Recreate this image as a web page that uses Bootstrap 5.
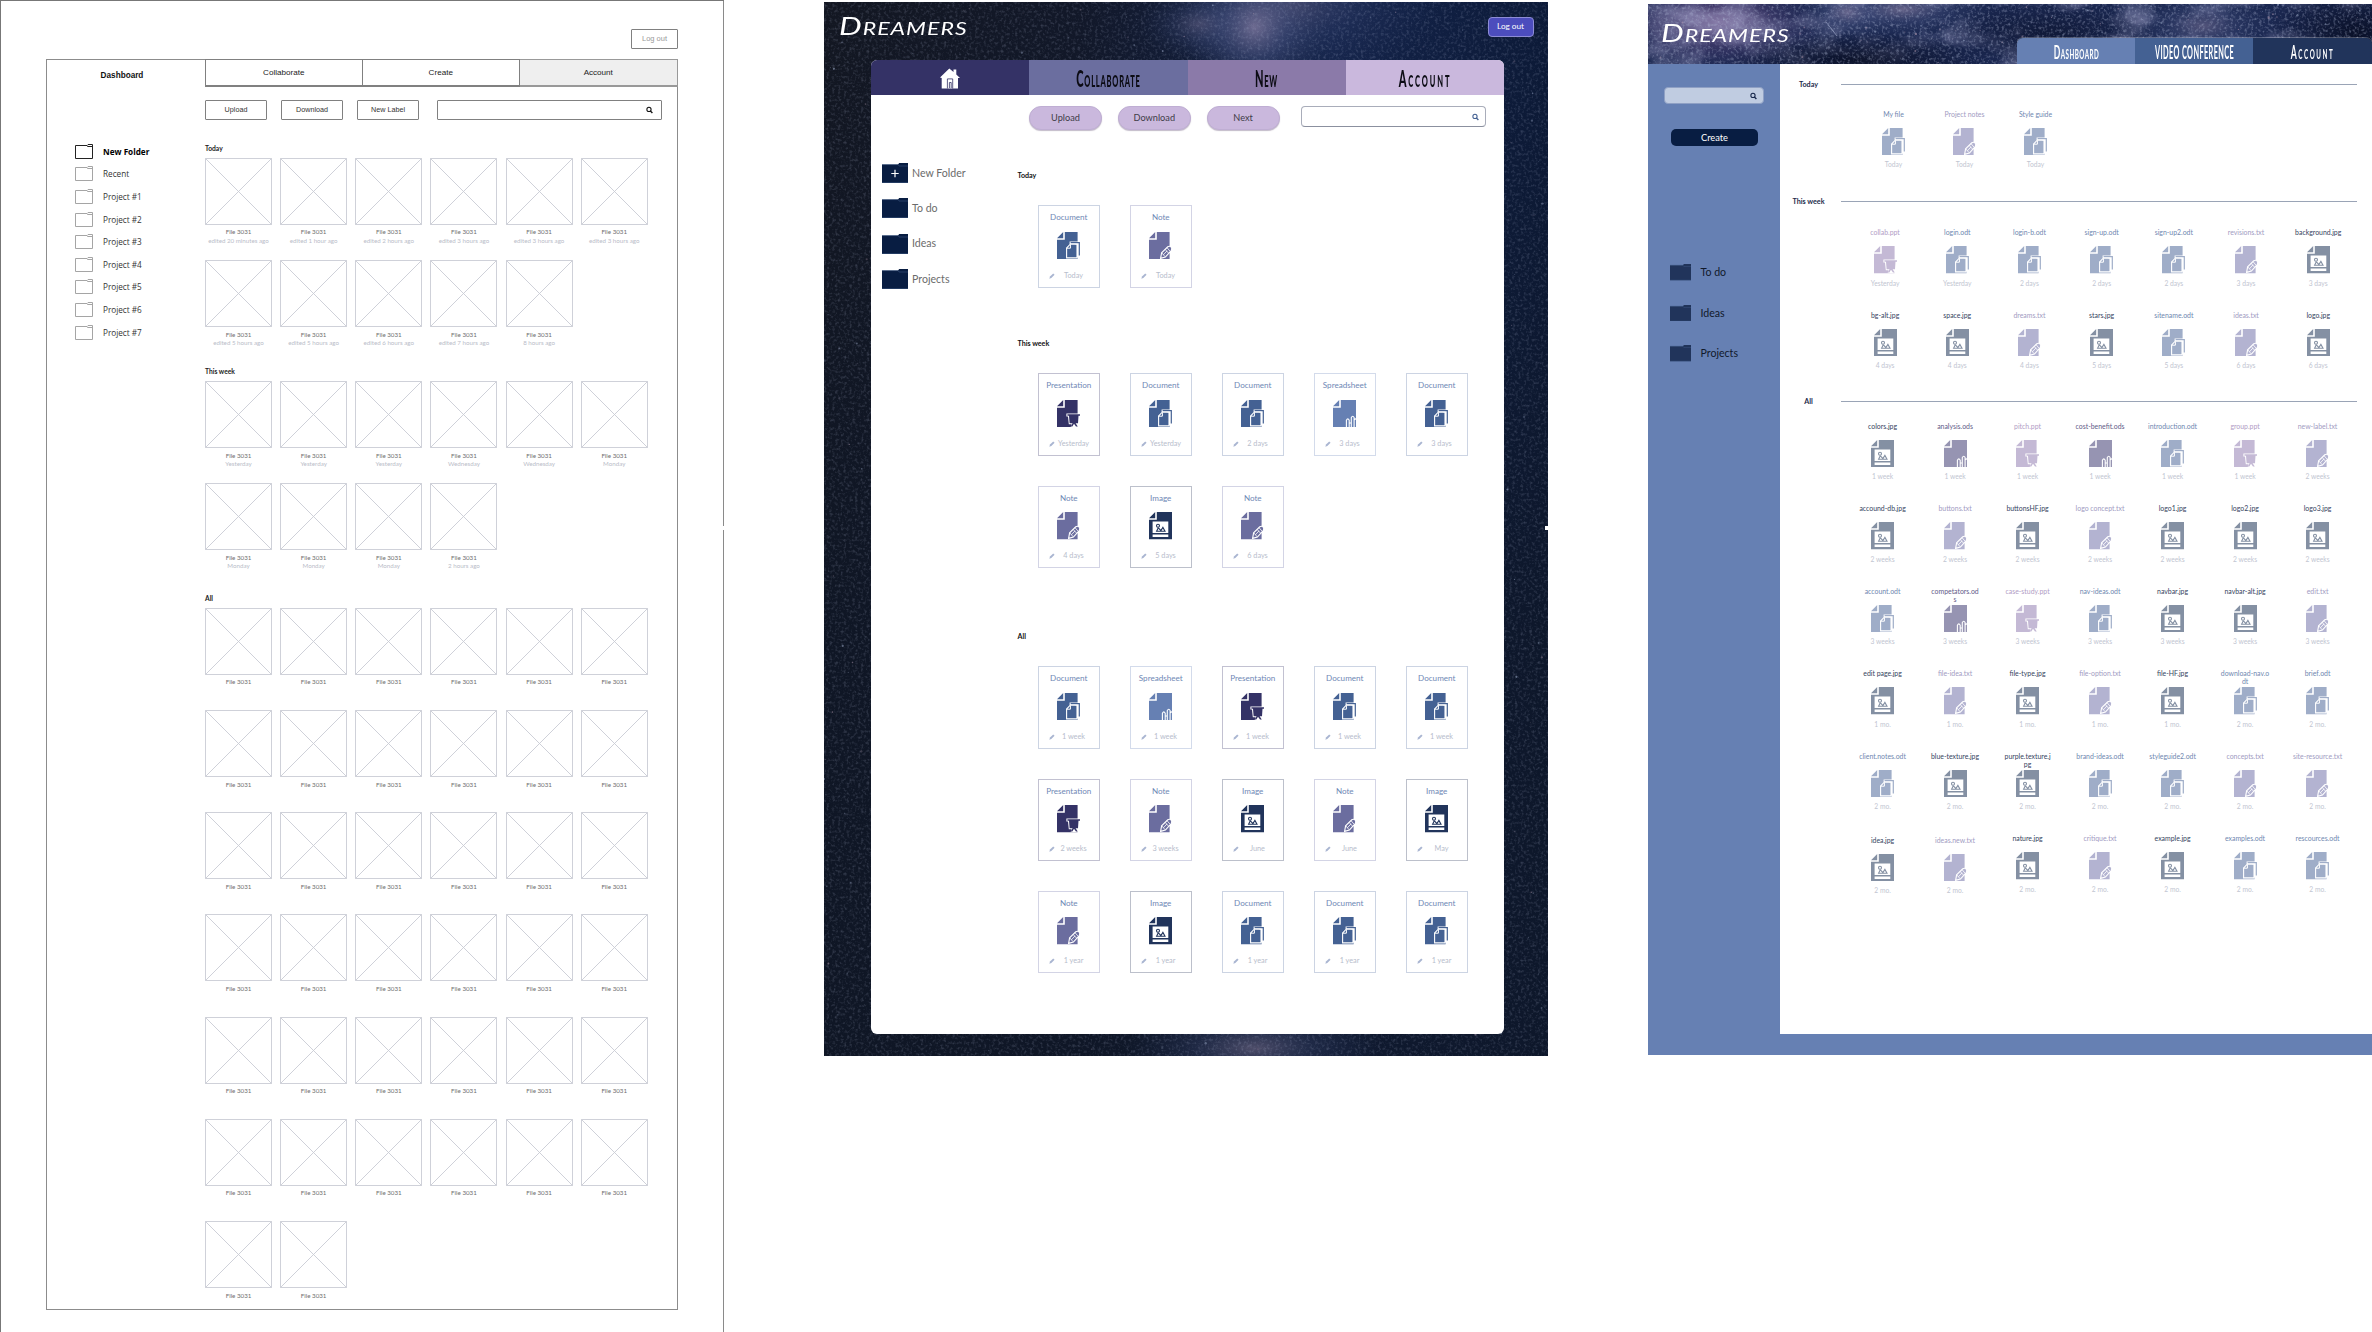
<!DOCTYPE html>
<html lang="en">
<head>
<meta charset="utf-8">
<title>Dreamers dashboards</title>
<link href="https://cdn.jsdelivr.net/npm/bootstrap@5.3.0/dist/css/bootstrap.min.css" rel="stylesheet">
<style>
body{width:2372px;height:1332px;overflow:hidden;background:#fff;font-family:Lato,"Open Sans",sans-serif;line-height:1}
svg{display:block;flex:none}
.board{width:724px;flex:none;position:relative}
.handle{position:absolute;right:-1px;top:526px;width:4px;height:4px;background:#fff}
.sheet-title{font-weight:700;line-height:10px;margin:0}
.cells{display:flex;flex-wrap:wrap;align-content:flex-start}

/* wireframe board */
.wire{height:1332px;box-shadow:inset 1px 1px #777,inset -1px 0 #8a8a8a;color:#333;font-family:"Liberation Sans",sans-serif}
.wire-top{height:59px;padding:29px 46px 0 0}
.wire .btn{font-size:7.2px;line-height:1;padding:0;height:20px;width:62px;border:1px solid #808080;border-radius:1px;color:#333;background:#fff}
.wire .btn.logout{width:47px;color:#999;font-size:7.5px}
.wire-panel{margin-left:46px;width:631.5px;height:1251px;box-shadow:inset 0 0 0 1px #8c8c8c}
.wire-side{width:159px;flex:none}
.wire-name{height:34px;width:152px;font-size:8.2px;font-weight:700;color:#111}
.wire-list{margin-top:46.6px;padding-left:29px;font:8.2px "Open Sans",sans-serif;color:#333}
.wire-list li{height:22.6px;gap:10px;padding-top:1px}
.wire-tabs{height:28px}
.wire-tabs .nav-link{padding:1px 0 0;color:#222;font-size:8.1px;border:1px solid #808080;border-bottom-width:2px;border-left-width:0;background:#fff}
.wire-tabs .nav-link:first-child{border-left-width:1px}
.wire-tabs .nav-link:last-child{background:#efefef;border-color:#999}
.wire-tools{margin-top:13px;gap:14px}
.wire-find{width:225px;height:20px;margin-left:4px;border:1px solid #808080;border-radius:1px;padding-right:8px}
.wire-body{margin-top:23px;font-family:Lato,sans-serif}
.wire-body section:nth-child(1){height:223.3px}
.wire-body section:nth-child(2){height:226.7px}
.wire-body .sheet-title{font-size:6.7px;margin-bottom:4.8px;color:#222}
.wire-cell{width:75.15px;height:102.2px;font-size:6.2px;line-height:8.5px;color:#6f6f6f}
.wire-cell svg{margin-bottom:3.6px}
.wire-cell div{width:67px;text-align:center;white-space:nowrap}
.wire-cell .when{color:#b9bcc8}

/* night sky board */
.night{margin:2px 0 0 100px;height:1054px;width:723.5px}
.sky{position:absolute;left:0;top:0}
.over{position:relative}
.brand{color:#fff;font-variant:small-caps;font-style:italic;font-size:25px;line-height:26px;letter-spacing:.8px;white-space:nowrap;transform-origin:0 50%;transform:scaleX(1.28)}
.night-top{height:58px;padding:10px 14px 0 15px}
.night-top .btn{width:46px;height:20px;margin-top:4.5px;padding:0;font-size:8.2px;line-height:1;color:#fff;background:#4c4dbd;border:1px solid #8d8cd6;border-radius:4px}
.night-panel{margin-left:47px;width:633px;height:974px;background:#fff;border-radius:6px;overflow:hidden}
.night-tabs{height:34.5px}
.night-tabs .nav-link{padding:2px 0 0;color:#0c0c14}
.tall{display:inline-block;font-variant:small-caps;white-space:nowrap;transform:scaleX(.48);font-weight:700;letter-spacing:1px}
.night-tabs .tall{font-size:23.5px;transform:scaleX(.47);font-weight:900;letter-spacing:1.6px}
.night-tabs .tall.spaced{letter-spacing:4px}
.night-tools{margin-top:11.5px;padding-left:158px;gap:15.8px}
.night-tools .btn{width:73px;height:23.5px;padding:0;font-size:9.2px;line-height:1;color:#3f3c48;background:#cab8dd;border:1px solid #bfaed3;border-radius:12px;box-shadow:0 1px 1px rgba(80,60,100,.35)}
.night-find{width:185px;height:21px;margin-left:6px;border:1px solid #a9adba;border-bottom-color:#8b909f;border-radius:4px;padding-right:6px}
.night-side{width:146.5px;flex:none;padding-left:11px;margin-top:26px}
.night-side li{height:35.3px;gap:4px;font-size:10.6px;color:#6b6b6b}
.night-body{margin-top:41.5px}
.night-body section:nth-child(1){height:168.2px}
.night-body section:nth-child(2){height:292.8px}
.night-body .sheet-title{font-size:7.1px;color:#111;margin-bottom:24.3px}
.night-body .cells{padding-left:20px;width:490px}
.file-card{width:62.5px;height:82.5px;margin:0 29.5px 29.8px 0;border:1px solid #ccd4e3;border-radius:0;padding-top:6px;font-size:8.1px;color:#6f88b5;text-align:center;line-height:10px}
.file-card .ico{margin:9.5px 0 11.3px 18px}
.file-card .when{width:44px;margin-left:10px;display:flex;align-items:center;font-size:7.3px;color:#b7bdcc}
.file-card .when span{flex:1;white-space:nowrap}
.night .doc .ico{color:#446193}.night .note .ico{color:#6b6d9f}.night .pres .ico{color:#343266}.night .sheet .ico{color:#6680b3}.night .img .ico{color:#21345b}
.file-card.img{border-color:#bcc0cb}.file-card.pres{border-color:#c2c1d1}.file-card.note{border-color:#d3d4e5}.file-card.sheet{border-color:#d3dbeb}

/* blue board */
.blue{margin:4px 0 0 100.5px;width:723.5px}
.blue-top{height:60px;position:relative}
.blue-top .over{height:60px;padding:15px 0 0 13px}
.blue-tabs{width:354.5px;height:26px;margin-top:19px;border-radius:6px 6px 0 0;overflow:hidden;box-shadow:0 -1px rgba(255,255,255,.25)}
.blue-tabs .nav-link{padding:1px 0 0;color:#fff}
.blue-tabs .tall{font-size:18px}
.blue-tabs .tall.packed{transform:scaleX(.405)}
.blue-tabs .tall.spaced{letter-spacing:3.4px}
.blue-side{width:131.5px;flex:none;background:#6680b3;padding-top:23px}
.blue-find{margin-left:16px;width:99.5px;height:17px;background:#c0cce1;border:1px solid #8fa0c4;border-radius:4px;padding-right:6px}
.blue-side .btn{display:block;margin:24.5px 0 0 23px;width:87px;height:17.5px;padding:0;font-size:9.3px;line-height:1;color:#fff;background:#081d42;border:0;border-radius:5px}
.blue-side ul{margin-top:106px;padding-left:22px}
.blue-side li{height:40.7px;gap:9.5px;font-size:10.6px;color:#11192b}
.blue-main{height:970px;width:592px;padding-top:15.5px}
.blue-main section:nth-child(1){height:117px}
.blue-main section:nth-child(2){height:200px}
.blue-main .sheet-title{width:58px;text-align:center;font-size:7.2px;color:#1d2b4b}
.rule-line{width:516px;height:1.5px;margin-left:3px;background:#9aa4b6}
.tile{font-size:6.9px;line-height:8px;text-align:center}
.tile .name{height:18px;width:49px;margin:0 auto;display:flex;flex-direction:column;align-items:center;white-space:nowrap}
.tile .ico{margin:0 auto 5px}
.tile .when{color:#c1c5d1;font-size:6.7px;white-space:nowrap}
.lower{padding-top:1.6px}
.blue .doc{color:#6f87b0}.blue .note{color:#a19bc2}.blue .pres{color:#b19dc5}.blue .img{color:#35435e}.blue .sheet{color:#625b88}
.blue .doc .ico{color:#9fadc8}.blue .note .ico{color:#b3b3d1}.blue .pres .ico{color:#c4b9d5}.blue .img .ico{color:#8490a3}.blue .sheet .ico{color:#9694b2}
.blue-foot{height:20.5px;background:#6680b3}
</style>
<script src="https://cdn.jsdelivr.net/npm/bootstrap@5.3.0/dist/js/bootstrap.bundle.min.js"></script>
</head>
<body>
<svg width="0" height="0" style="position:absolute">
  <defs>
    <symbol id="doc" viewBox="0 0 23 27.5"><path fill="currentColor" d="M0 27.5V7.8H7.8V0H20.6V27.5zM0 6.2 6.2 0V6.2z"/><path fill="#fff" d="M12.6 9.6H23V25.6H18V12H12.6z"/><path d="M13.6 10.6H22.3V23.5" fill="none" stroke="currentColor" stroke-width="1.2"/><path d="M13.2 12.2H20V25.9H9.6V16z" fill="currentColor" stroke="#fff" stroke-width="1.1"/><path d="M13.4 12.5V16.2H9.8" fill="none" stroke="#fff"/></symbol>
    <symbol id="note" viewBox="0 0 23 27.5"><path fill="currentColor" d="M0 27.5V7.8H7.8V0H20.6V27.5zM0 6.2 6.2 0V6.2z"/><path d="M11.6 26.4 12.6 20.8 18.8 14.8Q20.8 13.6 22.2 15.2 23.4 17 22 18.8L16.4 25z" fill="currentColor" stroke="#fff" stroke-width="1.1"/><path d="M12.8 20.9 16.2 24.8M16.2 17.4 19.6 21.2M18 15.6 21.2 19.4M14.4 22.8 18 18.9" fill="none" stroke="#fff" stroke-width=".8"/></symbol>
    <symbol id="pres" viewBox="0 0 23 27.5"><path fill="currentColor" d="M0 27.5V7.8H7.8V0H20.6V27.5zM0 6.2 6.2 0V6.2z"/><path fill="#fff" d="M9.4 13.4H23V16.6H22.2L21.8 24H21L22.5 27.5H13.5L14.6 24.2H11.8L11 16.6H9.4z"/><path fill="currentColor" d="M10.4 14.3H23V15.8H21.5L21 23.2H18.6L20.8 26.6H19L17 23.8 15.3 26.6H13.6L15.6 23.2H12.6L12 15.8H10.4z"/></symbol>
    <symbol id="sheet" viewBox="0 0 23 27.5"><path fill="currentColor" d="M0 27.5V7.8H7.8V0H23V27.5zM0 6.2 6.2 0V6.2z"/><path d="M13.4 27.5V20.2Q14.8 17.6 16.2 20.2V27.5M18.3 27.5V17.6Q19.7 15 21.1 17.6V27.5M16.4 23H18.2M21.2 20Q22.4 18 23 19.5" fill="none" stroke="#fff" stroke-width="1.1"/></symbol>
    <symbol id="img" viewBox="0 0 23 27.5"><path fill="currentColor" d="M0 27.5V7.8H7.8V0H23V27.5zM0 6.2 6.2 0V6.2z"/><path fill="#fff" d="M3.6 9.6H19.3V21H3.6zM3.6 22.6H19.3V25H3.6z"/><g fill="none" stroke="currentColor" stroke-width="1.1"><circle cx="9" cy="13.8" r="1.5"/><path d="M9.4 15.4 7.6 19.2H16L13.9 15.4 11.9 18.6 9.6 16.2"/></g></symbol>
    <symbol id="pen" viewBox="0 0 6 6"><path d="M.3 5.7 1 3.6 4.2.4 5.6 1.7 2.3 5z" fill="#a9b5d1"/></symbol>
    <symbol id="find" viewBox="0 0 8 8"><circle cx="3.4" cy="3.3" r="2.4" fill="none" stroke="currentColor" stroke-width="1.2"/><path d="M4.9 5 7.3 7.5" stroke="currentColor" stroke-width="1.6"/></symbol>
    <symbol id="folder" viewBox="0 0 26 20"><path d="M0 1.4H16L17.2 0H26V20H0z" fill="currentColor"/><path d="M0 1.6H16.2L17 3H26M0 19.6H26" fill="none" stroke="#3c5580" stroke-width=".6"/></symbol>
    <symbol id="wfolder" viewBox="0 0 18 15"><path d="M.5 1.5H12L13 .5H17.5V14.5H.5zM12 1.5 12.5 2.5H17.5" fill="none" stroke="currentColor"/></symbol>
    <symbol id="thumb" viewBox="0 0 67 67"><path d="M.5.5H66.5V66.5H.5zL66.5 66.5M66.5.5.5 66.5" fill="none" stroke="#c9ccd5" stroke-width=".9"/></symbol>
    <filter id="cloud" x="0" y="0" width="100%" height="100%"><feTurbulence type="fractalNoise" baseFrequency=".018 .024" numOctaves="5" seed="8"/><feColorMatrix values="0 0 0 0 .42  0 0 0 0 .42  0 0 0 0 .66  2.2 1.2 0 0 -1.5"/></filter>
    <filter id="grain" x="0" y="0" width="100%" height="100%"><feTurbulence type="fractalNoise" baseFrequency=".35" numOctaves="2" seed="3"/><feColorMatrix values="0 0 0 0 .45  0 0 0 0 .5  0 0 0 0 .68  1.8 0 0 0 -.86"/></filter>
    <linearGradient id="nbase" x1="0" x2="1"><stop offset="0" stop-color="#131722"/><stop offset=".35" stop-color="#121829"/><stop offset=".7" stop-color="#14244c"/><stop offset="1" stop-color="#0c1a38"/></linearGradient>
    <linearGradient id="nfade" x1="0" x2="0" y1="0" y2="1"><stop offset="0" stop-color="#0e1626" stop-opacity="0"/><stop offset=".6" stop-color="#0e1626" stop-opacity=".75"/></linearGradient>
    <radialGradient id="glow"><stop offset="0" stop-color="#8a80a4" stop-opacity=".85"/><stop offset=".45" stop-color="#44507f" stop-opacity=".5"/><stop offset="1" stop-color="#27365f" stop-opacity="0"/></radialGradient>
    <radialGradient id="dark"><stop offset="0" stop-color="#080e24" stop-opacity=".9"/><stop offset="1" stop-color="#080e24" stop-opacity="0"/></radialGradient>
    <radialGradient id="violet"><stop offset="0" stop-color="#8a5c96" stop-opacity=".6"/><stop offset="1" stop-color="#5b4a86" stop-opacity="0"/></radialGradient>
  </defs>
</svg>

<main class="d-flex align-items-start">
  <!-- Wireframe -->
  <div class="board wire">
    <div class="wire-top d-flex justify-content-end"><button class="btn logout">Log out</button></div>
    <div class="wire-panel d-flex">
      <aside class="wire-side">
        <div class="wire-name d-flex align-items-center justify-content-center">Dashboard</div>
        <ul class="wire-list list-unstyled" id="wireFolders"></ul>
      </aside>
      <div class="flex-fill">
        <nav class="wire-tabs nav nav-fill">
          <a class="nav-link w-25 d-flex align-items-center justify-content-center">Collaborate</a>
          <a class="nav-link w-25 d-flex align-items-center justify-content-center">Create</a>
          <a class="nav-link w-25 d-flex align-items-center justify-content-center">Account</a>
        </nav>
        <div class="wire-tools d-flex">
          <button class="btn">Upload</button><button class="btn">Download</button><button class="btn">New Label</button>
          <div class="wire-find d-flex align-items-center justify-content-end"><svg width="7" height="8" color="#111"><use href="#find"/></svg></div>
        </div>
        <div class="wire-body" id="wireBody"></div>
      </div>
    </div>
    <span class="handle"></span>
  </div>

  <!-- Night sky -->
  <div class="board night">
    <svg class="sky" width="723.5" height="1054">
      <rect width="724" height="1054" fill="url(#nbase)"/>
      <rect width="724" height="1054" fill="url(#nfade)"/>
      <ellipse cx="430" cy="25" rx="75" ry="70" fill="url(#glow)"/>
      <ellipse cx="375" cy="22" rx="60" ry="36" fill="url(#glow)" opacity=".45"/>
      <ellipse cx="470" cy="0" rx="150" ry="80" fill="url(#glow)" opacity=".4"/>
      <ellipse cx="430" cy="1046" rx="130" ry="45" fill="url(#glow)" opacity=".6"/>
      <rect width="724" height="1054" filter="url(#grain)" opacity=".3"/>
      <g data-stars="1000" data-w="723" data-h="1054" data-seed="7"></g>
    </svg>
    <div class="over">
      <div class="night-top d-flex justify-content-between align-items-start">
        <div class="brand">Dreamers</div>
        <button class="btn">Log out</button>
      </div>
      <div class="night-panel">
        <nav class="night-tabs nav nav-fill">
          <a class="nav-link w-25 d-flex align-items-center justify-content-center" style="background:#343266">
            <svg width="20" height="21" viewBox="0 0 20 21"><path fill="#fff" d="M0 9.5 9.3.5 13.5 4V1.5H16.3V6.5L20 10H18V20.5H1.7V10z"/><path d="M7.4 20.5V10.9H12.7V20.5M9.4 20V14.5H11.2V20" fill="none" stroke="#343266" stroke-width=".8"/></svg>
          </a>
          <a class="nav-link w-25 d-flex align-items-center justify-content-center" style="background:#6b6e9f"><span class="tall">Collaborate</span></a>
          <a class="nav-link w-25 d-flex align-items-center justify-content-center" style="background:#8b7aa9"><span class="tall">New</span></a>
          <a class="nav-link w-25 d-flex align-items-center justify-content-center" style="background:#cab8dd"><span class="tall spaced">Account</span></a>
        </nav>
        <div class="night-tools d-flex">
          <button class="btn">Upload</button><button class="btn">Download</button><button class="btn">Next</button>
          <div class="night-find d-flex align-items-center justify-content-end"><svg width="7" height="8" color="#446193"><use href="#find"/></svg></div>
        </div>
        <div class="d-flex">
          <ul class="night-side list-unstyled" id="nightFolders"></ul>
          <div class="night-body" id="nightBody"></div>
        </div>
      </div>
    </div>
    <span class="handle" style="top:524px"></span>
  </div>

  <!-- Blue dashboard -->
  <div class="board blue">
    <header class="blue-top">
      <svg class="sky" width="723.5" height="60">
        <rect width="724" height="60" fill="#1a2750"/>
        <ellipse cx="70" cy="18" rx="110" ry="50" fill="url(#violet)"/>
        <ellipse cx="200" cy="8" rx="50" ry="30" fill="url(#glow)"/>
        <ellipse cx="255" cy="5" rx="90" ry="30" fill="url(#glow)" opacity=".8"/>
        <ellipse cx="555" cy="22" rx="80" ry="40" fill="url(#glow)" opacity=".6"/>
        <rect width="724" height="60" filter="url(#cloud)" opacity=".6"/>
        <ellipse cx="210" cy="56" rx="130" ry="28" fill="url(#dark)"/>
        <ellipse cx="400" cy="30" rx="110" ry="32" fill="url(#dark)" opacity=".6"/>
        <ellipse cx="710" cy="30" rx="90" ry="50" fill="url(#dark)"/>
        <rect width="724" height="60" filter="url(#grain)" opacity=".6"/>
        <path d="M178 18 189 32" stroke="#9aa3c4" stroke-width=".7"/>
        <g data-stars="400" data-w="723" data-h="60" data-seed="21"></g>
      </svg>
      <div class="over d-flex justify-content-between align-items-start">
        <div class="brand">Dreamers</div>
        <nav class="blue-tabs nav nav-fill">
          <a class="nav-link w-25 d-flex align-items-center justify-content-center" style="background:#6680b3"><span class="tall">Dashboard</span></a>
          <a class="nav-link w-25 d-flex align-items-center justify-content-center" style="background:#446193"><span class="tall packed">VIDEO CONFERENCE</span></a>
          <a class="nav-link w-25 d-flex align-items-center justify-content-center" style="background:#21345b"><span class="tall spaced">Account</span></a>
        </nav>
      </div>
    </header>
    <div class="d-flex">
      <aside class="blue-side">
        <div class="blue-find d-flex align-items-center justify-content-end"><svg width="7" height="8" color="#16264a"><use href="#find"/></svg></div>
        <button class="btn">Create</button>
        <ul class="list-unstyled mb-0" id="blueFolders"></ul>
      </aside>
      <div class="blue-main" id="blueMain"></div>
    </div>
    <div class="blue-foot"></div>
  </div>
</main>

<script>
const $ = id => document.getElementById(id);

/* stars, from a small seeded generator so the sky is always the same */
document.querySelectorAll('[data-stars]').forEach(g => {
  let s = +g.dataset.seed, r = () => (s = (s * 16807) % 2147483647) / 2147483647, out = '';
  for (let i = 0; i < 20; i++) r();
  for (let i = 0; i < +g.dataset.stars; i++) {
    const k = r();
    out += `<circle cx="${(r()*g.dataset.w).toFixed(1)}" cy="${(r()*g.dataset.h).toFixed(1)}" r="${(.4+k*k*k*.8).toFixed(2)}" fill="${r()>.3?'#a9b8d6':'#c3a9bd'}" opacity="${(.12+r()*.42).toFixed(2)}"/>`;
  }
  g.innerHTML = out;
});

/* wireframe */
$('wireFolders').innerHTML = ['New Folder','Recent','Project #1','Project #2','Project #3','Project #4','Project #5','Project #6','Project #7']
  .map((n,i) => `<li class="d-flex align-items-center${i?'':' fw-bold text-black'}"><svg width="18" height="15" color="${i?'#a5a5a5':'#222'}"><use href="#wfolder"/></svg>${n}</li>`).join('');
const e = n => `edited ${n} ago`;
[['Today',[e('20 minutes'),e('1 hour'),e('2 hours'),e('3 hours'),e('3 hours'),e('3 hours'),e('5 hours'),e('5 hours'),e('6 hours'),e('7 hours'),'8 hours ago']],
 ['This week',['Yesterday','Yesterday','Yesterday','Wednesday','Wednesday','Monday','Monday','Monday','Monday','2 hours ago']],
 ['All',Array(38).fill('')]].forEach(([t,list]) => {
  $('wireBody').innerHTML += `<section><h2 class="sheet-title">${t}</h2><div class="cells">` + list.map(w =>
    `<div class="wire-cell"><svg width="67" height="67"><use href="#thumb"/></svg><div>File 3031</div>${w?`<div class="when">${w}</div>`:''}</div>`).join('') + '</div></section>';
});

/* night board */
$('nightFolders').innerHTML = ['New Folder','To do','Ideas','Projects'].map((n,i) =>
  `<li class="d-flex align-items-center"><svg width="26" height="20" color="#081d42"><use href="#folder"/>${i?'':'<path d="M13 6.8V14.2M9.3 10.5H16.7" stroke="#fff" stroke-width="1.2"/>'}</svg>${n}</li>`).join('');
const kinds = {doc:'Document',note:'Note',pres:'Presentation',sheet:'Spreadsheet',img:'Image'};
[['Today','doc:Today note:Today'],
 ['This week','pres:Yesterday doc:Yesterday doc:2_days sheet:3_days doc:3_days note:4_days img:5_days note:6_days'],
 ['All','doc:1_week sheet:1_week pres:1_week doc:1_week doc:1_week pres:2_weeks note:3_weeks img:June note:June img:May note:1_year img:1_year doc:1_year doc:1_year doc:1_year']
].forEach(([t,list]) => {
  $('nightBody').innerHTML += `<section><h2 class="sheet-title">${t}</h2><div class="cells">` + list.split(' ').map(x => {
    const [k,w] = x.replace('_',' ').split(':');
    return `<div class="file-card ${k}"><div>${kinds[k]}</div><svg class="ico" width="23" height="27.5"><use href="#${k}"/></svg><div class="when"><svg width="6" height="6"><use href="#pen"/></svg><span>${w}</span></div></div>`;
  }).join('') + '</div></section>';
});

/* blue board */
$('blueFolders').innerHTML = ['To do','Ideas','Projects'].map(n =>
  `<li class="d-flex align-items-center"><svg width="21" height="16.5" viewBox="0 0 26 20" preserveAspectRatio="none" color="#21345b"><use href="#folder" width="26" height="20"/></svg>${n}</li>`).join('');
const ext = {odt:'doc',txt:'note',ppt:'pres',ods:'sheet',jpg:'img'};
[['Today',20,78.5,71,['My file|Today|doc','Project notes|Today|note','Style guide|Today|doc']],
 ['This week',21.5,69.5,72.2,['collab.ppt|Yesterday','login.odt|Yesterday','login-b.odt|2 days','sign-up.odt|2 days','sign-up2.odt|2 days','revisions.txt|3 days','background.jpg|3 days','bg-alt.jpg|4 days','space.jpg|4 days','dreams.txt|4 days','stars.jpg|5 days','sitename.odt|5 days','ideas.txt|6 days','logo.jpg|6 days']],
 ['All',15,66.8,72.5,['colors.jpg|1 week','analysis.ods|1 week','pitch.ppt|1 week','cost-benefit.ods|1 week','introduction.odt|1 week','group.ppt|1 week','new-label.txt|2 weeks',
  'accound-db.jpg|2 weeks','buttons.txt|2 weeks','buttonsHF.jpg|2 weeks','logo concept.txt|2 weeks','logo1.jpg|2 weeks','logo2.jpg|2 weeks','logo3.jpg|2 weeks',
  'account.odt|3 weeks','competators.od/s|3 weeks|sheet','case-study.ppt|3 weeks','nav-ideas.odt|3 weeks','navbar.jpg|3 weeks','navbar-alt.jpg|3 weeks','edit.txt|3 weeks',
  'edit page.jpg|1 mo.','file-idea.txt|1 mo.','file-type.jpg|1 mo.','file-option.txt|1 mo.','file-HF.jpg|1 mo.','download-nav.o/dt|2 mo.|doc','brief.odt|2 mo.',
  'client.notes.odt|2 mo.','blue-texture.jpg|2 mo.','purple.texture.j/pg|2 mo.|img','brand-ideas.odt|2 mo.','styleguide2.odt|2 mo.','concepts.txt|2 mo.','site-resource.txt|2 mo.',
  'idea.jpg|2 mo.|img|lower','ideas.new.txt|2 mo.|note|lower','nature.jpg|2 mo.','critique.txt|2 mo.','example.jpg|2 mo.','examples.odt|2 mo.','rescources.odt|2 mo.']]
].forEach(([t,gap,left,w,list]) => {
  $('blueMain').innerHTML += `<section><div class="d-flex align-items-center" style="margin-bottom:${gap}px"><h2 class="sheet-title">${t}</h2><div class="rule-line"></div></div><div class="cells" style="padding-left:${left}px">` + list.map(x => {
    const [n,when,kind,low] = x.split('|'), k = kind || ext[n.slice(-3)];
    return `<div class="tile ${k} ${low||''}" style="width:${w}px;height:82.5px"><div class="name">${n.split('/').map(p=>`<span>${p}</span>`).join('')}</div><svg class="ico" width="23" height="27.5"><use href="#${k}"/></svg><div class="when">${when}</div></div>`;
  }).join('') + '</div></section>';
});
</script>
</body>
</html>
